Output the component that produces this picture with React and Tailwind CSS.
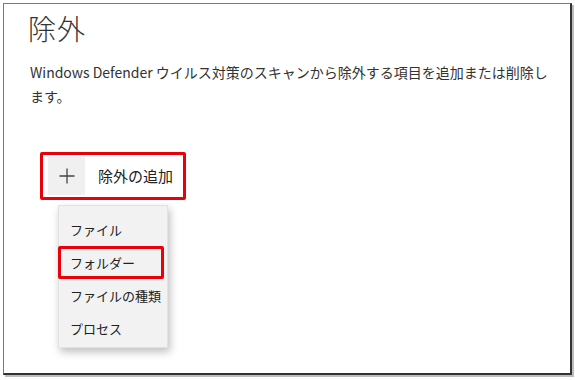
export default function App() {
  const items = ['ファイル', 'フォルダー', 'ファイルの種類', 'プロセス'];

  return (
    <div
      className="w-[575px] h-[380px] bg-white overflow-hidden pl-[3px] pt-[3px]"
      style={{ fontFamily: '"Segoe UI", "Noto Sans CJK JP", "Noto Sans", sans-serif' }}
    >
      <div className="w-[569px] h-[372px] border-l border-t border-[#7a7a7a] border-r-2 border-b-2 border-r-[#333] border-b-[#333] shadow-[2px_2px_0_#bdbdbd] pl-[24px] pt-[6px]">
        <h1 className="text-[28px] leading-[36px] font-light text-[#333] tracking-[1px]">除外</h1>
        <p className="mt-[14px] pl-[2px] w-[528px] text-[14px] leading-[24px] text-[#333]">
          Windows Defender ウイルス対策のスキャンから除外する項目を追加または削除します。
        </p>

        <div className="relative mt-[44px] ml-[12px]">
          <div className="w-[146px] h-[48px] border-[3px] border-[#e8000b] rounded-[2px] flex items-center pl-[5px]">
            <div className="w-[37px] h-[38px] bg-[#f0f0f0] flex items-center justify-center">
              <svg width="16" height="16" viewBox="0 0 16 16" stroke="#444" strokeWidth="1.3" fill="none">
                <path d="M8 0.5V15.5M0.5 8H15.5" />
              </svg>
            </div>
            <span className="ml-[13px] text-[15px] text-[#222]">除外の追加</span>
          </div>

          <div className="absolute left-[18px] top-[53px] w-[110px] h-[143px] bg-[#f2f2f2] border border-[#e2e2e2] shadow-[2px_4px_8px_rgba(0,0,0,0.25)] pt-[7px]">
            {items.map((item, i) => (
              <div
                key={item}
                className={
                  i === 1
                    ? 'h-[33px] w-[106px] -ml-[1px] border-[3px] border-[#e8000b] rounded-[2px] flex items-center pl-[9px] text-[13px] text-[#222]'
                    : 'h-[33px] flex items-center pl-[11px] text-[13px] text-[#222]'
                }
              >
                {item}
              </div>
            ))}
          </div>
        </div>
      </div>
    </div>
  );
}
